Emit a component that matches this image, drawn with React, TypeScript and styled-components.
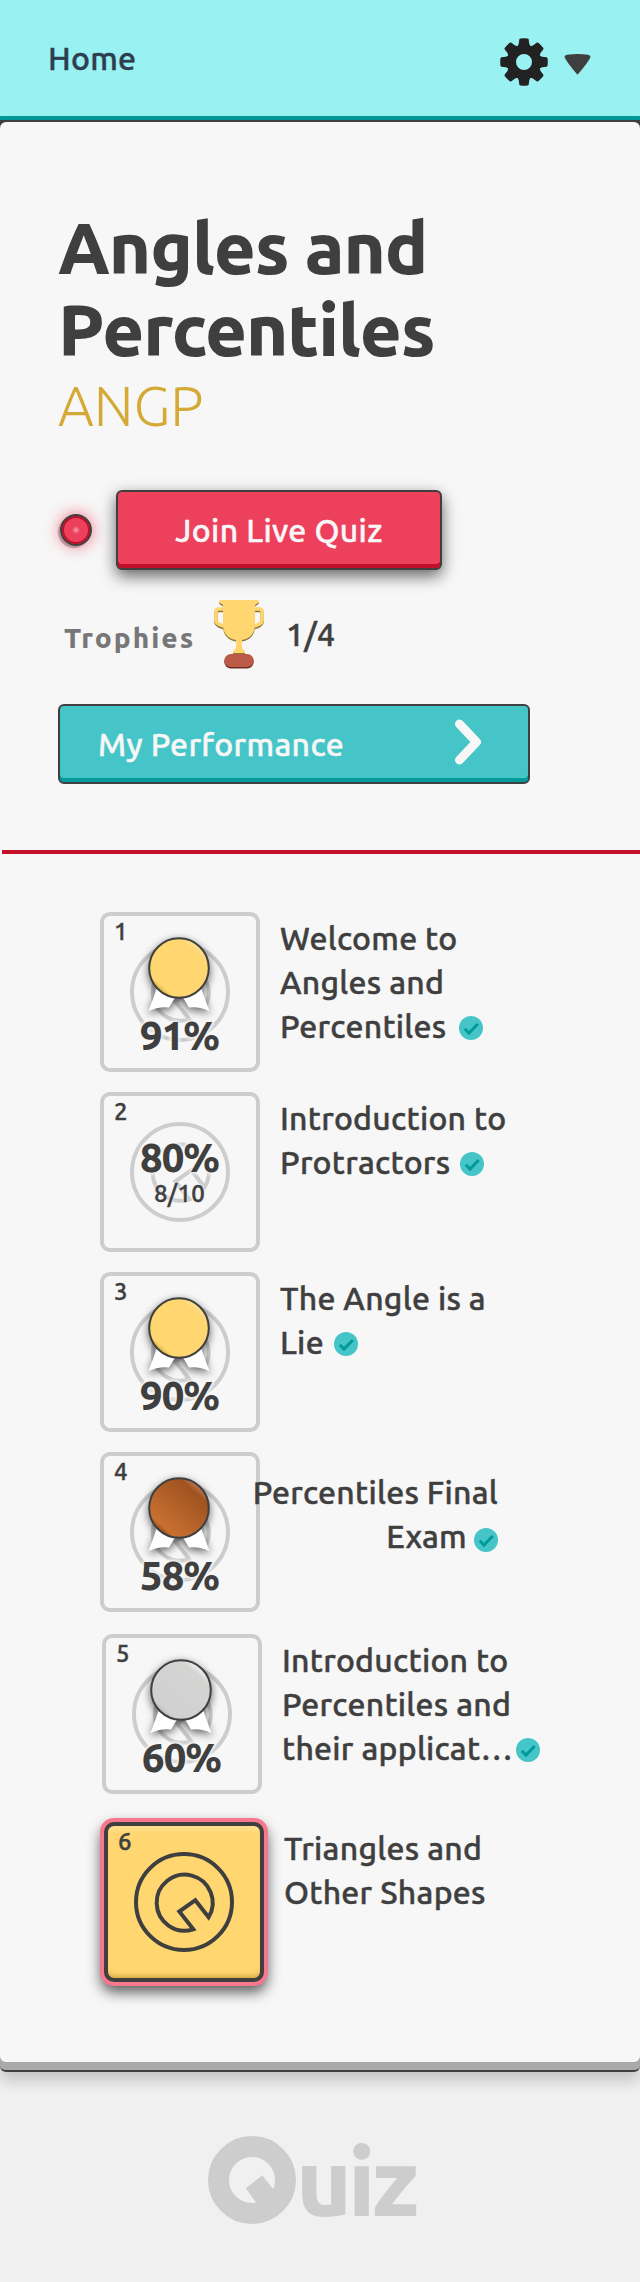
import React from "react";
import styled, { createGlobalStyle, css } from "styled-components";

const ink = "#3f3f3f";
const paper = "#f7f7f7";
const line = "#cdcdcd";

const Global = createGlobalStyle`
  * { box-sizing: border-box; }
  body {
    margin: 0;
    background: #f0f0f0;
    color: ${ink};
    font: 500 32px/44px Ubuntu, "Noto Sans", sans-serif;
    letter-spacing: 0.26px;
    -webkit-text-stroke: 0.45px currentColor;
  }
`;

const Header = styled.header`
  display: flex;
  justify-content: space-between;
  align-items: flex-start;
  height: 120px;
  padding: 36px 49px 0 48px;
  background: #9af1f1;
  border-bottom: 4px solid #009a9a;
`;

const HomeLink = styled.a`
  color: #2c3e50;
`;

const Settings = styled.div`
  display: flex;
  gap: 16px;
`;

const Gear = styled.svg`
  width: 48px;
  height: 48px;
  margin-top: 2px;
  fill: #222;
`;

const Caret = styled.svg`
  width: 27px;
  height: 21px;
  margin-top: 18px;
  fill: ${ink};
`;

const Panel = styled.main`
  padding-bottom: 8px;
  border: solid ${ink};
  border-width: 2px 0;
  border-radius: 0 0 6px 6px;
  background: linear-gradient(${ink} 50%, #a9a9a9 50%);
  box-shadow: 0 8px 16px rgba(0, 0, 0, 0.2);
`;

const PanelBody = styled.div`
  height: 1940px;
  padding-top: 85px;
  border-radius: 6px;
  background: ${paper};
`;

const Intro = styled.section`
  padding-left: 58px;
`;

const Title = styled.h1`
  width: 460px;
  margin: 0;
  font-size: 72px;
  line-height: 82px;
  font-weight: 800;
  letter-spacing: -1.05px;
  -webkit-text-stroke: 0;
`;

const Code = styled.div`
  margin-top: 3px;
  color: #d4a935;
  font-size: 56px;
  line-height: 64px;
  font-weight: 300;
  letter-spacing: 0;
  -webkit-text-stroke: 0;
`;

const LiveRow = styled.div`
  display: flex;
  align-items: center;
  gap: 24px;
  margin: 52px 0 0 2px;
`;

const LiveDot = styled.span`
  width: 32px;
  height: 32px;
  border: 2px solid ${ink};
  border-radius: 50%;
  background: radial-gradient(circle, #f9a3b2 0, #f57d92 1.5px, #ed405c 4px);
  box-shadow: inset 0 0 0 2px #bf0f2b, 0 0 16px rgba(237, 64, 92, 0.75), -2px 2px 1px rgba(0, 0, 0, 0.3);
`;

const Button = styled.button<{ $kind: "live" | "performance" }>`
  display: flex;
  height: 80px;
  padding: 16px 0 0;
  border: 2px solid ${ink};
  border-radius: 6px;
  color: ${paper};
  font: inherit;
  letter-spacing: 0.35px;
  ${({ $kind }) =>
    $kind === "live"
      ? css`
          width: 326px;
          justify-content: center;
          background: #ed405c;
          box-shadow: inset 0 -4px #bf0f2b, 0 6px 16px rgba(0, 0, 0, 0.6);
        `
      : css`
          width: 472px;
          justify-content: space-between;
          padding-left: 38px;
          padding-right: 46px;
          background: #45c5c7;
          box-shadow: inset 0 -4px #009a9a;
        `}
`;

const Chevron = styled.svg`
  width: 28px;
  height: 48px;
  margin-top: -4px;
  fill: none;
  stroke: ${paper};
  stroke-width: 9;
  stroke-linecap: round;
  stroke-linejoin: round;
`;

const TrophyRow = styled.div`
  display: flex;
  align-items: flex-start;
  height: 76px;
  margin: 26px 0 32px 6px;
`;

const TrophyLabel = styled.span`
  width: 150px;
  padding-top: 26px;
  color: #777;
  font-size: 28px;
  line-height: 32px;
  font-weight: 800;
  letter-spacing: 2px;
  -webkit-text-stroke: 0;
`;

const TrophyIcon = styled.svg`
  width: 50px;
  height: 70px;
  margin-top: 4px;
`;

const TrophyCount = styled.span`
  padding: 16px 0 0 22px;
`;

const Rule = styled.hr`
  height: 4px;
  margin: 66px 0 58px 2px;
  border: 0;
  background: #c60f2b;
`;

const List = styled.section`
  display: flex;
  flex-direction: column;
  gap: 20px;
  padding-left: 100px;
`;

const Row = styled.article<{ $shift: number; $drop: number }>`
  display: flex;
  align-items: flex-start;
  gap: 20px;
  margin: ${({ $drop }) => $drop}px 0 0 ${({ $shift }) => $shift}px;
`;

const Tile = styled.div<{ $active: boolean }>`
  position: relative;
  flex: none;
  width: 160px;
  height: 160px;
  border: 4px solid ${({ $active }) => ($active ? ink : line)};
  border-radius: 10px;
  color: ${({ $active }) => ($active ? ink : line)};
  ${({ $active }) =>
    $active &&
    css`
      background: #ffd670;
      box-shadow: 0 0 0 4px #f7788d, 0 7px 14px 3px rgba(0, 0, 0, 0.65),
        inset 0 6px 6px -3px rgba(255, 255, 255, 0.3), inset 0 -5px 5px -3px rgba(150, 105, 0, 0.45);
    `}
`;

const TileMark = styled.svg`
  position: absolute;
  inset: 26px;
  width: 100px;
  height: 100px;
  fill: none;
  stroke: currentColor;
  stroke-width: 4;
`;

const TileNumber = styled.span`
  position: absolute;
  top: 2px;
  left: 10px;
  color: ${ink};
  font-size: 24px;
  line-height: 28px;
`;

const MedalIcon = styled.svg`
  position: absolute;
  top: 14px;
  left: 35px;
  width: 80px;
  height: 88px;
  overflow: visible;
  filter: drop-shadow(0 3px 4px rgba(0, 0, 0, 0.6));
`;

const Score = styled.div<{ $top: number }>`
  position: absolute;
  top: ${({ $top }) => $top}px;
  left: 0;
  width: 151px;
  color: ${ink};
  text-align: center;
  font-size: 40px;
  line-height: 46px;
  font-weight: 800;
  letter-spacing: -1px;
  -webkit-text-stroke: 0;
  text-shadow: 0 0 4px ${paper}, 0 0 4px ${paper}, 0 0 4px ${paper};
`;

const Fraction = styled.div`
  position: absolute;
  top: 84px;
  left: 0;
  width: 151px;
  color: ${ink};
  text-align: center;
  font-size: 24px;
  line-height: 28px;
  text-shadow: 0 0 3px ${paper}, 0 0 3px ${paper};
`;

const Name = styled.h2<{ $final?: boolean }>`
  margin: 4px 0 0;
  font: inherit;
  white-space: nowrap;
  ${({ $final }) =>
    $final &&
    css`
      width: 246px;
      margin: 18px 0 0 -28px;
      text-align: right;
      position: relative;
    `}
`;

const Done = styled.svg<{ $gap: number; $low: number }>`
  width: 24px;
  height: 24px;
  margin-left: ${({ $gap }) => $gap}px;
  vertical-align: ${({ $low }) => -$low}px;
`;

const Footer = styled.footer`
  display: flex;
  align-items: flex-start;
  height: 210px;
  padding: 64px 0 0 208px;
  color: ${line};
`;

const LogoMark = styled.svg`
  width: 88px;
  height: 88px;
  fill: none;
  stroke: currentColor;
`;

const LogoText = styled.span`
  margin-top: -10px;
  font-size: 95px;
  line-height: 110px;
  font-weight: 800;
  letter-spacing: -4px;
  -webkit-text-stroke: 0;
`;

type MedalKind = "gold" | "bronze" | "silver";

const medalStops: Record<MedalKind, [string, string, string, string]> = {
  gold: ["#c39a20", "#ffd670", "#ffd670", "#ffe4a3"],
  bronze: ["#6f3206", "#c97031", "#9f5320", "#d08a5c"],
  silver: ["#a4a4a4", "#d0d0d0", "#d4d4d3", "#ffffff"],
};

function Medal({ kind }: { kind: MedalKind }) {
  const [shade, from, to, shine] = medalStops[kind];
  return (
    <MedalIcon viewBox="0 0 80 88">
      <defs>
        <linearGradient id={`medal-${kind}`} x1="0.14" y1="0.92" x2="0.86" y2="0.08">
          <stop offset="0" stopColor={shade} />
          <stop offset="0.13" stopColor={from} />
          <stop offset="0.84" stopColor={to} />
          <stop offset="1" stopColor={shine} />
        </linearGradient>
      </defs>
      <path d="M18 58 L9.500 81 Q20 76 30 77.500 L36 67.500 V55Z" fill="#fff" />
      <path d="M62 58 L70.500 81 Q60 76 50 77.500 L44 67.500 V55Z" fill="#fff" />
      <circle cx="40" cy="38" r="29.800" fill={`url(#medal-${kind})`} stroke={ink} strokeWidth="2" />
    </MedalIcon>
  );
}

function Check({ gap, low = 2 }: { gap: number; low?: number }) {
  return (
    <Done viewBox="0 0 24 24" $gap={gap} $low={low}>
      <circle cx="12" cy="12" r="12" fill="#45c5c7" />
      <path d="M5.800 12.800 L10 17 L18.800 8" fill="none" stroke="#009a9a" strokeWidth="3" />
    </Done>
  );
}

interface Quiz {
  lines: string[];
  active?: boolean;
  final?: boolean;
  medal?: MedalKind;
  score?: string;
  fraction?: string;
  checkGap?: number;
  shift?: number;
  drop?: number;
}

const quizzes: Quiz[] = [
  { lines: ["Welcome to", "Angles and", "Percentiles"], medal: "gold", score: "91%", checkGap: 13 },
  { lines: ["Introduction to", "Protractors"], score: "80%", fraction: "8/10", checkGap: 10 },
  { lines: ["The Angle is a", "Lie"], medal: "gold", score: "90%", checkGap: 10 },
  { lines: ["Percentiles Final", "Exam"], medal: "bronze", score: "58%", checkGap: 7, final: true },
  {
    lines: ["Introduction to", "Percentiles and", "their applicat…"],
    medal: "silver",
    score: "60%",
    checkGap: 3.5,
    shift: 2,
    drop: 2,
  },
  { lines: ["Triangles and", "Other Shapes"], active: true, shift: 4, drop: 8 },
];

export default function App() {
  return (
    <>
      <Global />
      <Header>
        <HomeLink>Home</HomeLink>
        <Settings>
          <Gear viewBox="-24 -24 48 48">
            <path
              fillRule="evenodd"
              d="M0 -17A17 17 0 1 1 0 17A17 17 0 1 1 0 -17ZM0 -8A8 8 0 1 0 0 8A8 8 0 1 0 0 -8Z"
            />
            {[0, 45, 90, 135, 180, 225, 270, 315].map((angle) => (
              <path
                key={angle}
                transform={`rotate(${angle})`}
                d="M-7.500 -14 L-5.300 -18 L-4.700 -22.500 Q-4.500 -23.500 -3.500 -23.600 Q0 -24 3.500 -23.600 Q4.500 -23.500 4.700 -22.500 L5.300 -18 L7.500 -14Z"
              />
            ))}
          </Gear>
          <Caret viewBox="0 0 27 21">
            <path d="M.500 3 Q.500 1 3 .700 Q13.500 -.500 24 .700 Q26.500 1 26.500 3 Q25.500 6.500 14.200 20 Q13.500 20.800 12.800 20 Q1.500 6.500 .500 3Z" />
          </Caret>
        </Settings>
      </Header>
      <Panel>
        <PanelBody>
          <Intro>
            <Title>Angles and Percentiles</Title>
            <Code>ANGP</Code>
            <LiveRow>
              <LiveDot />
              <Button $kind="live">Join Live Quiz</Button>
            </LiveRow>
            <TrophyRow>
              <TrophyLabel>Trophies</TrophyLabel>
              <TrophyIcon viewBox="0 0 50 70">
                {[
                  { dy: 1.4, color: "#8f7638" },
                  { dy: 0, color: "#ffd670" },
                ].map(({ dy, color }) => (
                  <g key={color} transform={`translate(0 ${dy})`}>
                    <path
                      d="M10 9H4.500Q1.900 9 1.900 12V20Q1.900 24 9.500 26M40 9H45.500Q48.100 9 48.100 12V20Q48.100 24 40.500 26"
                      fill="none"
                      stroke={color}
                      strokeWidth="3.600"
                    />
                    <path
                      d="M7 0H43Q45.500 0 44.500 2.500L41 5V25C41 34 35 39 28 40V46Q28 49.500 31 51V53H19V51Q22 49.500 22 46V40C15 39 9 34 9 25V5L5.500 2.500Q4.500 0 7 0Z"
                      fill={color}
                    />
                  </g>
                ))}
                <rect x="10.300" y="55.500" width="29.400" height="13" rx="6.500" fill="#6f2c22" />
                <rect x="10.300" y="54" width="29.400" height="13" rx="6.500" fill="#bb5a47" />
              </TrophyIcon>
              <TrophyCount>1/4</TrophyCount>
            </TrophyRow>
            <Button $kind="performance">
              My Performance
              <Chevron viewBox="0 0 28 48">
                <path d="M5.500 6 L22.500 24 L5.500 42" />
              </Chevron>
            </Button>
          </Intro>
          <Rule />
          <List>
            {quizzes.map((quiz, index) => (
              <Row key={index} $shift={quiz.shift ?? 0} $drop={quiz.drop ?? 0}>
                <Tile $active={!!quiz.active}>
                  <TileMark viewBox="-50 -50 100 100">
                    <circle r="48" />
                    <path d="M9.300 27.300 A28 28 0 1 1 24.600 15.200 L11.300 -1.800 L-4.700 9.500Z" />
                  </TileMark>
                  <TileNumber>{index + 1}</TileNumber>
                  {quiz.medal && <Medal kind={quiz.medal} />}
                  {quiz.score && <Score $top={quiz.fraction ? 39 : 97}>{quiz.score}</Score>}
                  {quiz.fraction && <Fraction>{quiz.fraction}</Fraction>}
                </Tile>
                <Name $final={quiz.final}>
                  {quiz.lines.map((text, i) => (
                    <React.Fragment key={i}>
                      {i > 0 && <br />}
                      {text}
                    </React.Fragment>
                  ))}
                  {quiz.checkGap && <Check gap={quiz.checkGap} low={quiz.final ? 4 : 2} />}
                </Name>
              </Row>
            ))}
          </List>
        </PanelBody>
      </Panel>
      <Footer>
        <LogoMark viewBox="-44 -44 88 88">
          <circle r="33.500" strokeWidth="21" />
          <path d="M-6.300 8.200 L10.300 -4.500 L22 10 L18 22 L5 24Z" fill="currentColor" stroke="none" />
        </LogoMark>
        <LogoText>uiz</LogoText>
      </Footer>
    </>
  );
}
